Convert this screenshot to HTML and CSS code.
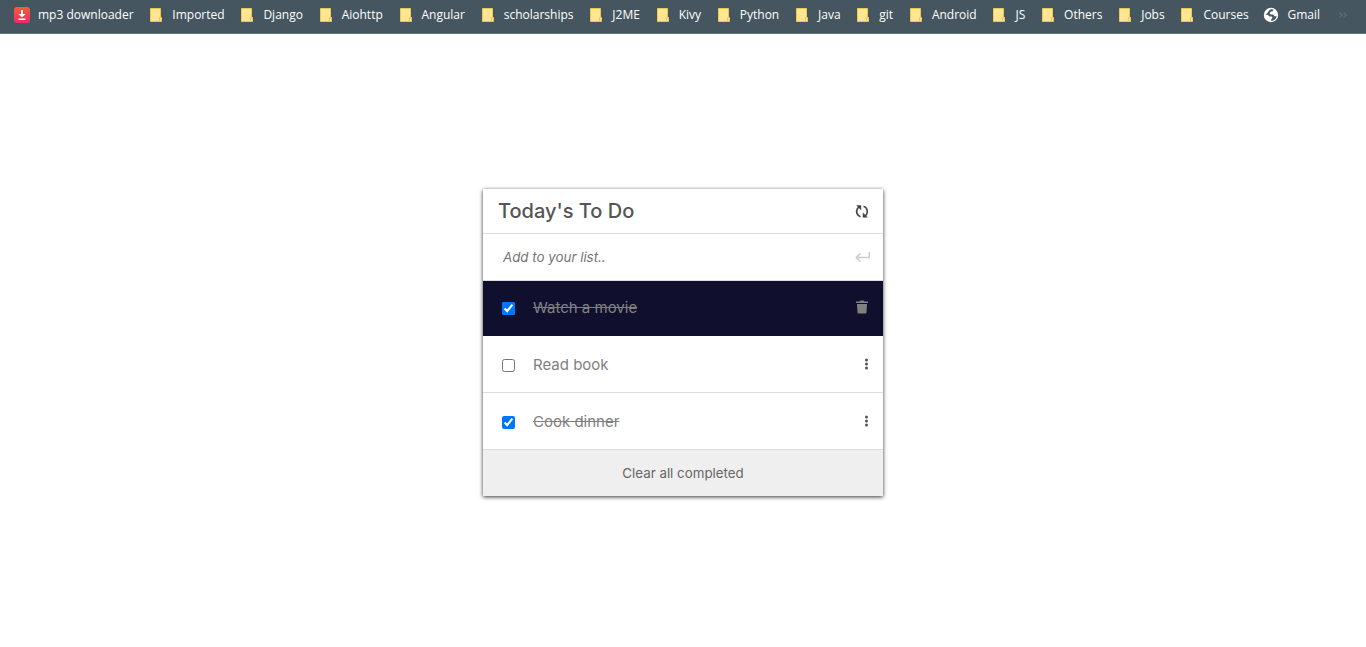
FILE: index.html
```html
<!DOCTYPE html>
<html lang="en">
<head>
<meta charset="utf-8">
<title>To Do List</title>
<link rel="stylesheet" href="styles.css">
</head>
<body>
<svg class="sprite" aria-hidden="true">
  <symbol id="folder" viewBox="0 0 16 16">
    <path d="M2.500 1.500h10v9h1v4H2.500z" fill="#ffe693" stroke="#ebc94d"/>
    <path d="M11.500 14v-3.500h2" fill="none" stroke="#ebc94d"/>
  </symbol>
  <symbol id="dots" viewBox="0 0 16 16">
    <circle cx="8.500" cy="3" r="1.500"/><circle cx="8.500" cy="7" r="1.500"/><circle cx="8.500" cy="11" r="1.500"/>
  </symbol>
</svg>
<nav class="bookmarks" aria-label="Bookmarks">
  <a class="bookmark" href="#"><svg class="icon" viewBox="0 0 16 16"><defs><linearGradient id="red" x1="0" y1="0" x2="0" y2="1"><stop offset="0" stop-color="#ff5a36"/><stop offset="1" stop-color="#f0286a"/></linearGradient></defs><rect width="16" height="16" rx="3" fill="url(#red)"/><path d="M7 3h2v4h2.500L8 10.500 4.500 7H7zM4.500 11.500h7V13h-7z" fill="#fff"/></svg>mp3 downloader</a>
  <a class="bookmark" href="#"><svg class="icon"><use href="#folder"/></svg>Imported</a>
  <a class="bookmark" href="#"><svg class="icon"><use href="#folder"/></svg>Django</a>
  <a class="bookmark" href="#"><svg class="icon"><use href="#folder"/></svg>Aiohttp</a>
  <a class="bookmark" href="#"><svg class="icon"><use href="#folder"/></svg>Angular</a>
  <a class="bookmark" href="#"><svg class="icon"><use href="#folder"/></svg>scholarships</a>
  <a class="bookmark" href="#"><svg class="icon"><use href="#folder"/></svg>J2ME</a>
  <a class="bookmark" href="#"><svg class="icon"><use href="#folder"/></svg>Kivy</a>
  <a class="bookmark" href="#"><svg class="icon"><use href="#folder"/></svg>Python</a>
  <a class="bookmark" href="#"><svg class="icon"><use href="#folder"/></svg>Java</a>
  <a class="bookmark" href="#"><svg class="icon"><use href="#folder"/></svg>git</a>
  <a class="bookmark" href="#"><svg class="icon"><use href="#folder"/></svg>Android</a>
  <a class="bookmark" href="#"><svg class="icon"><use href="#folder"/></svg>JS</a>
  <a class="bookmark" href="#"><svg class="icon"><use href="#folder"/></svg>Others</a>
  <a class="bookmark" href="#"><svg class="icon"><use href="#folder"/></svg>Jobs</a>
  <a class="bookmark" href="#"><svg class="icon"><use href="#folder"/></svg>Courses</a>
  <a class="bookmark" href="#"><svg class="icon" viewBox="0 0 16 16"><circle cx="8" cy="8" r="7.200" fill="#fff"/><path d="M10.500 2.500 9.500 4.500H8L6.500 6.200 7.500 7.500h2.700l1.300 1.700h2.200c-.4 1.900-1.900 3.800-4.200 4.500l-1.200.2V12l1.300-1.300-.8-1.200H6.500L5 8 2.500 7.500 4.500 6 6 3.500 8 2.300z" fill="#455660"/></svg>Gmail</a>
  <button class="more" type="button" aria-label="More bookmarks"><svg class="icon" viewBox="0 0 16 16"><path d="M4.500 5.500 7 8l-2.500 2.500M8.500 5.500 11 8l-2.500 2.500" fill="none" stroke="#5e6870" stroke-width="1.500"/></svg></button>
</nav>
<main class="todo">
  <header class="head">
    <h1 class="title">Today's To Do</h1>
    <button class="action" type="button" aria-label="Refresh"><svg class="icon" viewBox="0 0 16 16"><path d="M6.500 13.700C3 12.800 1.600 8.500 3.500 5.500L5.200 3.800M9.500 3.300c3.500.9 4.900 5.200 3 8.200l-1.700 1.700" fill="none" stroke="#444" stroke-width="1.600"/><path d="M2.200 2.200h5v5zM13.800 14.500h-5v-5z" fill="#444"/></svg></button>
  </header>
  <form class="add">
    <input class="entry" type="text" placeholder="Add to your list.." aria-label="Add to your list">
    <button class="action" type="button" aria-label="Add"><svg class="icon" viewBox="0 0 16 16"><path d="M14.300 3v5.500H1.500M5.500 4.200 1.200 8.500l4.300 4.300" fill="none" stroke="#ccc" stroke-width="1.500"/></svg></button>
  </form>
  <ul class="list">
    <li class="item selected">
      <input class="check" type="checkbox" id="movie" checked><label class="name" for="movie">Watch a movie</label>
      <button class="action" type="button" aria-label="Delete"><svg class="icon" viewBox="0 0 16 16"><path d="M2 1.500h3.500l1-1h3l1 1H14V3H2zM3 4h10l-.5 8.500q-.1 1-1 1h-7q-.9 0-1-1z" fill="#808080"/></svg></button>
    </li>
    <li class="item">
      <input class="check" type="checkbox" id="book"><label class="name" for="book">Read book</label>
      <button class="action menu" type="button" aria-label="Options"><svg class="icon"><use href="#dots"/></svg></button>
    </li>
    <li class="item">
      <input class="check" type="checkbox" id="dinner" checked><label class="name" for="dinner">Cook dinner</label>
      <button class="action menu" type="button" aria-label="Options"><svg class="icon"><use href="#dots"/></svg></button>
    </li>
  </ul>
  <button class="clear" type="button">Clear all completed</button>
</main>
</body>
</html>
```
FILE: styles.css
```css
* { box-sizing: border-box; }
body { display: flow-root; min-height: 100vh; margin: 0; background: #fff; font-family: Inter, sans-serif; }
button { padding: 0; border: 0; background: none; font-family: inherit; cursor: pointer; }
.sprite { position: absolute; width: 0; height: 0; }
.icon { display: block; flex: none; width: 16px; height: 16px; }

.bookmarks {
  display: flex;
  justify-content: space-between;
  align-items: center;
  padding: 6px 15px 9px 14px;
  border-bottom: 1px solid #697780;
  background: #455660;
  font: 12px/18px "Open Sans", sans-serif;
}
.bookmark {
  display: flex;
  align-items: center;
  gap: 8px;
  color: #fff;
  text-decoration: none;
  white-space: nowrap;
}

.todo {
  width: 400px;
  max-width: 100%;
  margin: 155px auto 0;
  background: #fff;
  box-shadow: 0 1px 4px #333;
}
.head, .add, .item {
  display: flex;
  align-items: center;
  border-bottom: 1px solid #dcdcdc;
}
.head { padding: 10px 13px 10px 15px; }
.title { flex: 1; margin: 0; color: #545454; font-size: 20px; font-weight: 500; line-height: 24px; }
.add { padding: 13px 12px 13px 20px; }
.entry {
  flex: 1;
  min-width: 0;
  padding: 0;
  border: 0;
  outline: 0;
  font-family: inherit;
  line-height: 20px;
}
.entry::placeholder { color: #757575; font-style: italic; }
.list { margin: 0; padding: 0; list-style: none; }
.item { padding: 19px 13px 17px 19px; }
.item.selected { padding-top: 17px; padding-bottom: 18px; border-bottom: 0; background: #10102e; }
.check { width: 13px; height: 13px; margin: 0 18px 0 0; }
.name { flex: 1; color: #808080; font-size: 15px; line-height: 20px; }
.check:checked + .name { text-decoration: line-through; }
.menu { margin-right: -4px; fill: #545454; }
.clear {
  display: block;
  width: 100%;
  padding: 13px;
  background: #efefef;
  color: #666;
  line-height: 20px;
}
```
